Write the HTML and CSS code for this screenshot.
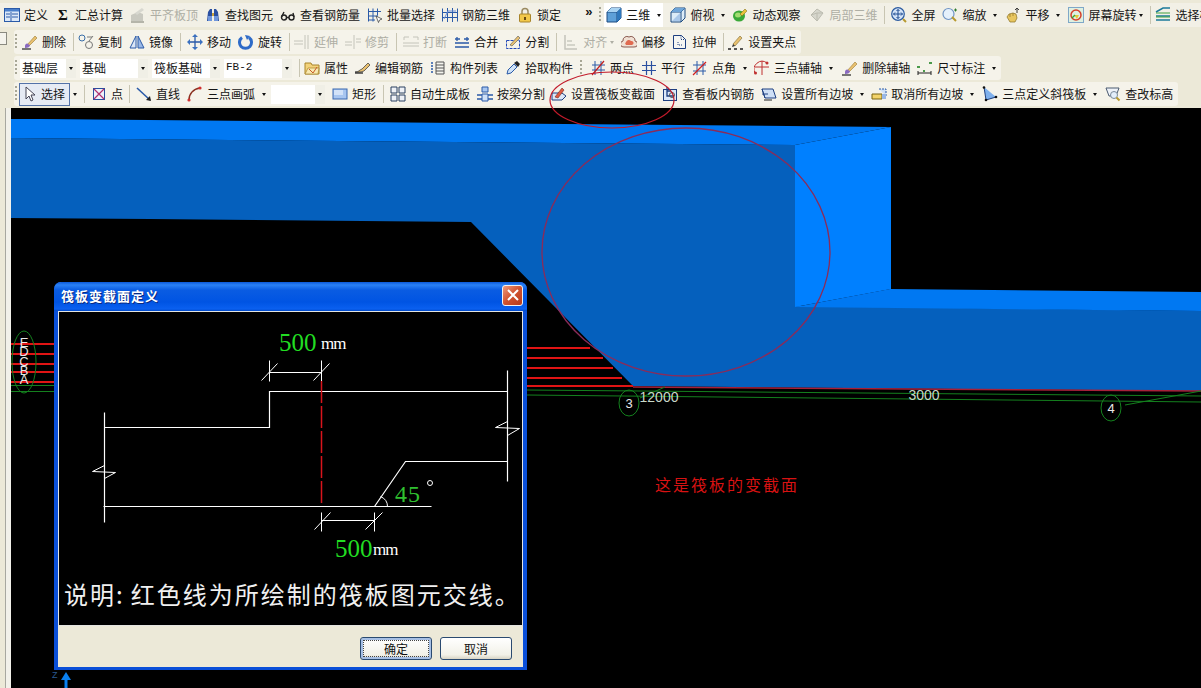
FILE: index.html
```html
<!DOCTYPE html>
<html lang="zh-CN">
<head>
<meta charset="utf-8">
<title>筏板变截面定义</title>
<link rel="stylesheet" href="styles.css">
</head>
<body>
<svg class="defs" width="0" height="0" aria-hidden="true">
  <defs>
    <symbol id="i-form" viewBox="0 0 16 16"><rect x=".5" y="1.5" width="15" height="13" fill="#dbe8f8" stroke="#2a5aa8"/><rect x="1" y="2" width="14" height="2.5" fill="#4a80cc"/><path d="M2 7h4M2 10h4M8 7h6M8 10h6M7 5v9" stroke="#2a5aa8"/></symbol>
    <symbol id="i-align" viewBox="0 0 16 16"><path d="M1 14V8l7-3v9zM8 14V5l5 2v7z" fill="#c9c9c0"/><path d="M5 6l7-5 2 2-7 5z" fill="#d8d8d0"/><path d="M1 15h13" stroke="#b5b5aa" stroke-width="2"/></symbol>
    <symbol id="i-binoc" viewBox="0 0 16 16"><path d="M2 14l1-9 2-3h2v12zM14 14l-1-9-2-3H9v12z" fill="#2a4fa0"/><path d="M3 14V9h4v5zM9 14V9h4v5z" fill="#6f96dc"/><path d="M7 6h2v3H7z" fill="#c9a13a"/></symbol>
    <symbol id="i-glass" viewBox="0 0 16 16"><g fill="none" stroke="#222" stroke-width="1.4"><circle cx="4" cy="10.5" r="2.5"/><circle cx="11.5" cy="10.5" r="2.5"/><path d="M1.5 10L4 5M14 10l-1-4M6.5 10.5h2.5"/></g></symbol>
    <symbol id="i-batch" viewBox="0 0 16 16"><g fill="none" stroke="#2a5aa8"><path d="M1.5 1.5v13M6 1.5v13M10.5 1.5v7M1 4.5h13M1 9h10M1 13h7"/></g><path d="M9 9l6 3-2.5 1-1 2.500z" fill="#fff" stroke="#333" stroke-width=".7"/></symbol>
    <symbol id="i-rebar3d" viewBox="0 0 16 16"><g fill="none" stroke="#2a5aa8"><path d="M.5 1.500v13M15.500 1.500v13M5.500 1v14M10.500 1v14M0 5.500h16M0 10.500h16"/></g><path d="M2 12l4-8h8" fill="none" stroke="#6a8fd8"/></symbol>
    <symbol id="i-lock" viewBox="0 0 16 16"><path d="M5 7V4.500a3 3 0 0 1 6 0V7" fill="none" stroke="#9a8a60" stroke-width="1.5"/><rect x="2.500" y="7" width="11" height="8" rx="1" fill="#f2c84a" stroke="#a8842a"/><path d="M7 10h2v3H7z" fill="#6a4c10"/></symbol>
    <symbol id="i-cube" viewBox="0 0 16 16"><path d="M1 5l4-4h10v10l-4 4H1z" fill="#5ea0d8" stroke="#1d4a80"/><path d="M1 5h10v10M11 5l4-4" fill="none" stroke="#1d4a80"/><path d="M1 5l4-4h10l-4 4z" fill="#a9d3f2"/><path d="M11 5l4-4v10l-4 4z" fill="#2f78bc"/></symbol>
    <symbol id="i-cube2" viewBox="0 0 16 16"><path d="M1 5l4-4h10v10l-4 4H1z" fill="#dcecf8" stroke="#1d4a80"/><path d="M1 5h10v10M11 5l4-4" fill="none" stroke="#1d4a80"/><path d="M1 5l4-4h10l-4 4z" fill="#6fa5d8"/><path d="M2 14l8-8v8z" fill="#a9c8ea"/></symbol>
    <symbol id="i-orbit" viewBox="0 0 16 16"><ellipse cx="7" cy="9" rx="6" ry="5.500" fill="#3aa838"/><ellipse cx="6" cy="8" rx="3" ry="2.500" fill="#a2dc70"/><path d="M8 7l5-5 2 2-5 5z" fill="#e6c23a" stroke="#7a6410" stroke-width=".5"/></symbol>
    <symbol id="i-local" viewBox="0 0 16 16"><path d="M8 2l6 4-6 8-6-6z" fill="#d6d6cc" stroke="#bcbcb0"/><path d="M2 8l6-2 6 0M8 6v8" stroke="#bcbcb0" fill="none"/></symbol>
    <symbol id="i-zoomfull" viewBox="0 0 16 16"><circle cx="7" cy="7" r="6.300" fill="#d3e3f7" stroke="#2c5ba0" stroke-width="1.200"/><path d="M7 2.500v9M2.500 7h9M5.500 4L7 2.500 8.500 4M5.500 10L7 11.500 8.500 10M4 5.500L2.500 7 4 8.500M10 5.500L11.500 7 10 8.500" stroke="#1d4a90" fill="none"/><path d="M12 12l3 3" stroke="#b89a30" stroke-width="2"/></symbol>
    <symbol id="i-zoom" viewBox="0 0 16 16"><circle cx="6.500" cy="7" r="5.500" fill="#e5f0fb" stroke="#6f94c4" stroke-width="1.200"/><path d="M10 10l4 4" stroke="#b89a30" stroke-width="2"/><path d="M12 3h3M13.500 1.500v3" stroke="#2c7a2c"/></symbol>
    <symbol id="i-pan" viewBox="0 0 16 16"><path d="M2 10l2-3 4-1 3 1 1 4-2 4H5z" fill="#e8c660" stroke="#8a7024" stroke-width=".7"/><path d="M12 1v5M10 3l2-2 2 2" stroke="#3d3d3d" fill="none"/><path d="M8 6v3M5 7v3" stroke="#8a7024" stroke-width=".7"/></symbol>
    <symbol id="i-screenrot" viewBox="0 0 16 16"><rect x=".5" y=".5" width="15" height="15" fill="#dff0e0" stroke="#7fa8c8"/><circle cx="8" cy="8" r="5" fill="none" stroke="#d6402a" stroke-width="1.500"/><path d="M6 8h5l-2 4z" fill="#e8c83a"/><path d="M4 11l3-3" stroke="#3aa838" stroke-width="1.500"/></symbol>
    <symbol id="i-layer" viewBox="0 0 16 16"><path d="M1 5l7-4h7M1 9h14M1 13h14" stroke="#1d7a9a" stroke-width="1.500" fill="none"/><path d="M1 6h14M1 10h14" stroke="#3ea03e"/></symbol>
    <symbol id="i-brush" viewBox="0 0 16 16"><path d="M5 11l8-9 2 2-8 8z" fill="#e8c070" stroke="#9a7a30" stroke-width=".6"/><path d="M3 12c0-2 2-3 3-2l2 1c0 2-2 3-5 3z" fill="#8a6ac0"/><path d="M0 15h9" stroke="#222" stroke-width="1.200"/></symbol>
    <symbol id="i-copy" viewBox="0 0 16 16"><g fill="none" stroke="#3a6ea8"><circle cx="4" cy="4" r="3"/></g><g fill="none" stroke="#777"><circle cx="11" cy="11" r="3.500"/><path d="M9 3l5 0M11 7l4-5"/></g></symbol>
    <symbol id="i-mirror" viewBox="0 0 16 16"><path d="M7 2v12H1z" fill="#dbe6f6" stroke="#2a5aa8"/><path d="M9 2v12h6z" fill="#9ab8e6" stroke="#2a5aa8"/></symbol>
    <symbol id="i-move" viewBox="0 0 16 16"><path d="M8 1v14M1 8h14" stroke="#2a5aa8" stroke-width="1.300"/><path d="M8 0l3 3H5zM8 16l3-3H5zM0 8l3-3v6zM16 8l-3-3v6z" fill="#3a70c0"/></symbol>
    <symbol id="i-rotate" viewBox="0 0 16 16"><path d="M4 3.500a6 6 0 1 0 7 0" fill="none" stroke="#2e6bc8" stroke-width="3"/><path d="M7 1l5 1-3 4z" fill="#2e6bc8"/></symbol>
    <symbol id="i-extend" viewBox="0 0 16 16"><path d="M0 7h9M0 10h9M11 1v14M14 1v14" stroke="#c4c4ba" fill="none"/></symbol>
    <symbol id="i-trim" viewBox="0 0 16 16"><path d="M0 8h7M0 11h7M9 1v14M11 5h5M11 8h5" stroke="#c4c4ba" fill="none"/></symbol>
    <symbol id="i-break" viewBox="0 0 16 16"><path d="M1 6V3h5M10 3h5v3M0 9h16M0 12h16" stroke="#c4c4ba" fill="none"/></symbol>
    <symbol id="i-merge" viewBox="0 0 16 16"><path d="M1 9h14M1 13h14M3 3v4M13 3v4M1 5h5M10 5h5" stroke="#2a5aa8" stroke-width="1.300" fill="none"/></symbol>
    <symbol id="i-split" viewBox="0 0 16 16"><rect x="1.500" y="6.500" width="13" height="8" fill="none" stroke="#2348b8" stroke-dasharray="3 1"/><path d="M5 11l8-9 2 2-8 8z" fill="#e8c070" stroke="#555" stroke-width=".6"/></symbol>
    <symbol id="i-alignL" viewBox="0 0 16 16"><path d="M2 1v14h12" stroke="#c4c4ba" fill="none" stroke-width="1.500"/><path d="M4 6h5v2H4zM4 10h8v2H4z" fill="#d4d4ca"/></symbol>
    <symbol id="i-offset" viewBox="0 0 16 16"><path d="M3 13a3 3 0 0 1-1-6 4 4 0 0 1 6-4 4 4 0 0 1 6 4 3 3 0 0 1-1 6z" fill="#f0e0d4" stroke="#8a5a50"/><path d="M5 11a2 2 0 0 1 0-3 3 3 0 0 1 5-1 2 2 0 0 1 1 4z" fill="#e06a50"/></symbol>
    <symbol id="i-stretch" viewBox="0 0 16 16"><path d="M1.500 1.500h8l4 4v9h-12z" fill="#f6f6f2" stroke="#1d3f80"/><path d="M9 1.500v4h4.500M6 8v3h4" fill="none" stroke="#1d3f80" stroke-dasharray="1 1"/></symbol>
    <symbol id="i-grip" viewBox="0 0 16 16"><path d="M5 10l7-8 2 2-7 8z" fill="#e8c070" stroke="#7a6a30" stroke-width=".6"/><path d="M0 15h3M6 15h3M12 15h3" stroke="#222" stroke-width="1.400"/><path d="M5 10l-1 3 3-1z" fill="#333"/></symbol>
    <symbol id="i-attr" viewBox="0 0 16 16"><path d="M1 3h6l1 2h7v9H1z" fill="#f3d27a" stroke="#a8842a"/><path d="M1 14l3-6h11l-1 6z" fill="#f8e8b0" stroke="#a8842a" stroke-width=".7"/><path d="M5 9l4 4 4-6" stroke="#c85a2a" fill="none"/></symbol>
    <symbol id="i-pen" viewBox="0 0 16 16"><path d="M0 12c4 0 4-2 7-3l6-6 2 2-6 6c-3 1-4 1-9 1z" fill="#e8c070" stroke="#333" stroke-width=".7"/><path d="M0 13h8" stroke="#111" stroke-width="1.200"/></symbol>
    <symbol id="i-list" viewBox="0 0 16 16"><path d="M6 2h8v12H6z" fill="#f4f4ee" stroke="#555"/><path d="M6 5h8M6 8h8M6 11h8" stroke="#555"/><path d="M1 3h2M1 6h2M1 9h2M1 12h2" stroke="#2a5aa8" stroke-width="1.500"/></symbol>
    <symbol id="i-drop" viewBox="0 0 16 16"><path d="M2 14l1-4 6-6 3 3-6 6z" fill="#cfe2f7" stroke="#2a5aa8"/><path d="M9 3l3-2 3 3-2 3z" fill="#222"/></symbol>
    <symbol id="i-twopt" viewBox="0 0 16 16"><path d="M2 5h13M2 10h13M5 1v14M11 1v14" stroke="#2a5aa8" fill="none"/><path d="M2 15L14 1" stroke="#c02020" stroke-width="1.200"/></symbol>
    <symbol id="i-par" viewBox="0 0 16 16"><path d="M1 5.500h14M1 10.500h14M5.500 1v14M10.500 1v14" stroke="#2a4fa0" stroke-width="1.200"/></symbol>
    <symbol id="i-angle" viewBox="0 0 16 16"><path d="M1 5h13M1 11h13M5 1v14M11 1v14" stroke="#2a5aa8" fill="none"/><path d="M1 15L14 2" stroke="#d02020" stroke-width="1.300"/></symbol>
    <symbol id="i-threeax" viewBox="0 0 16 16"><path d="M1 7h14M8 1v14" stroke="#c03030" fill="none"/><path d="M1 13a8 8 0 0 1 12-10" stroke="#c03030" fill="none"/><circle cx="1.500" cy="13" r="1.500" fill="#c03030"/><circle cx="13" cy="3" r="1.500" fill="#c03030"/></symbol>
    <symbol id="i-dim" viewBox="0 0 16 16"><path d="M1 11v4M14 11v4M1 13h13" stroke="#222" fill="none"/><path d="M0 6h3v2H0zM6 10h2v2H6zM12 2h3v2h-3z" fill="#4a9a4a"/></symbol>
    <symbol id="i-cursor" viewBox="0 0 16 16"><path d="M5 1v12l3-3 2 5 2-1-2-5h4z" fill="#fff" stroke="#445"/></symbol>
    <symbol id="i-point" viewBox="0 0 16 16"><rect x="2.500" y="2.500" width="11" height="11" fill="#eef2fa" stroke="#2a4fa0"/><path d="M3 3l10 10M13 3L3 13" stroke="#b03070" stroke-width="1.200"/></symbol>
    <symbol id="i-line" viewBox="0 0 16 16"><path d="M1 2l13 12" stroke="#2a5aa8" stroke-width="1.600"/><path d="M15 15l-5-1 4-4z" fill="#222"/></symbol>
    <symbol id="i-arc" viewBox="0 0 16 16"><path d="M2 14C2 8 6 3 13 2" fill="none" stroke="#8a3020" stroke-width="1.500"/><circle cx="2" cy="14" r="1.600" fill="#d03030"/><circle cx="13" cy="2" r="1.600" fill="#d03030"/></symbol>
    <symbol id="i-rect" viewBox="0 0 16 16"><rect x="1" y="3" width="14" height="10" fill="#a8c6f0" stroke="#3a68b0"/><rect x="2" y="4" width="9" height="5" fill="#d2e2f8"/></symbol>
    <symbol id="i-auto" viewBox="0 0 16 16"><path d="M1 1h6v6H1zM9 1h6v6H9zM1 9h6v6H1zM9 9h6v6H9z" fill="#eef1f6" stroke="#2a4060"/></symbol>
    <symbol id="i-beam" viewBox="0 0 16 16"><path d="M5 1h6v5H5z" fill="#a8c6f0" stroke="#2a5aa8"/><path d="M0 9h16M0 13h16" stroke="#2a5aa8" stroke-width="1.300"/><path d="M5 8h6v7H5z" fill="#cfe0f6" stroke="#2a5aa8"/></symbol>
    <symbol id="i-setvar" viewBox="0 0 16 16"><path d="M1 7h10l4 3-4 4H1z" fill="#dce8f8" stroke="#1d3f80"/><path d="M4 11l7-9 2 2-6 8z" fill="#e05a40" stroke="#7a2a20" stroke-width=".6"/></symbol>
    <symbol id="i-viewin" viewBox="0 0 16 16"><rect x="1.500" y="3.500" width="13" height="11" fill="#dce8f8" stroke="#1d3f80"/><path d="M5 1v9h7M5 5h4" fill="none" stroke="#1d3f80" stroke-width="1.300"/><circle cx="10" cy="9" r="2.500" fill="none" stroke="#555"/></symbol>
    <symbol id="i-slope" viewBox="0 0 16 16"><path d="M1 3h11l3 9H4z" fill="#cfe0f6" stroke="#1d3f80"/><path d="M1 3l3 9M1 8h6" stroke="#1d3f80" fill="none"/><path d="M3 14h8" stroke="#222"/></symbol>
    <symbol id="i-noslope" viewBox="0 0 16 16"><path d="M1 8h10v5H1z" fill="#f2d36a" stroke="#7a6410"/><path d="M8 3l7 0v7" fill="#cfe0f6" stroke="#2a5aa8" stroke-dasharray="2 1"/><path d="M11 8h4v5h-4z" fill="#9ab8e6"/></symbol>
    <symbol id="i-tri" viewBox="0 0 16 16"><path d="M2 1l2 13 10-3z" fill="#7fb0ec"/><path d="M2 1l2 13 10-3" fill="none" stroke="#1d3f80"/><circle cx="2" cy="1.500" r="1.300" fill="#111"/><circle cx="4" cy="14" r="1.300" fill="#111"/><circle cx="14" cy="11" r="1.300" fill="#111"/></symbol>
    <symbol id="i-check" viewBox="0 0 16 16"><path d="M1 2h13l-3 8H4z" fill="#eef2f8" stroke="#4a5a70"/><circle cx="9" cy="9" r="3.500" fill="#e3eefa" stroke="#7a8a9a"/><path d="M11.500 11.500l3 3" stroke="#b89a30" stroke-width="2"/></symbol>
  </defs>
</svg>

<div class="app">
  <header class="tools">
    <div class="row r1">
      <div class="it"><svg class="ic"><use href="#i-form"/></svg><span>定义</span></div>
      <div class="it"><span class="ic sigma">Σ</span><span>汇总计算</span></div>
      <div class="it off"><svg class="ic"><use href="#i-align"/></svg><span>平齐板顶</span></div>
      <div class="it"><svg class="ic"><use href="#i-binoc"/></svg><span>查找图元</span></div>
      <div class="it"><svg class="ic"><use href="#i-glass"/></svg><span>查看钢筋量</span></div>
      <div class="it"><svg class="ic"><use href="#i-batch"/></svg><span>批量选择</span></div>
      <div class="it"><svg class="ic"><use href="#i-rebar3d"/></svg><span>钢筋三维</span></div>
      <div class="it"><svg class="ic"><use href="#i-lock"/></svg><span>锁定</span></div>
      <span class="more">»</span>
      <i class="grip g-hl"></i>
      <div class="hl">
        <div class="it"><svg class="ic"><use href="#i-cube"/></svg><span>三维</span></div>
        <i class="arr"></i>
      </div>
      <div class="it"><svg class="ic"><use href="#i-cube2"/></svg><span>俯视</span></div>
      <i class="arr"></i>
      <div class="it"><svg class="ic"><use href="#i-orbit"/></svg><span>动态观察</span></div>
      <div class="it off plus2"><svg class="ic"><use href="#i-local"/></svg><span>局部三维</span></div>
      <i class="sep wide"></i>
      <div class="it"><svg class="ic"><use href="#i-zoomfull"/></svg><span>全屏</span></div>
      <div class="it"><svg class="ic"><use href="#i-zoom"/></svg><span>缩放</span></div>
      <i class="arr"></i>
      <div class="it plus1"><svg class="ic"><use href="#i-pan"/></svg><span>平移</span></div>
      <i class="arr"></i>
      <div class="it plus1"><svg class="ic"><use href="#i-screenrot"/></svg><span>屏幕旋转</span></div>
      <i class="arr tight"></i>
      <i class="sep"></i>
      <div class="it"><svg class="ic"><use href="#i-layer"/></svg><span>选择构件</span></div>
    </div>

    <div class="row bar">
      <i class="grip"></i>
      <div class="it"><svg class="ic"><use href="#i-brush"/></svg><span>删除</span></div>
      <i class="sep"></i>
      <div class="it"><svg class="ic"><use href="#i-copy"/></svg><span>复制</span></div>
      <div class="it"><svg class="ic"><use href="#i-mirror"/></svg><span>镜像</span></div>
      <i class="sep wide"></i>
      <div class="it"><svg class="ic"><use href="#i-move"/></svg><span>移动</span></div>
      <div class="it"><svg class="ic"><use href="#i-rotate"/></svg><span>旋转</span></div>
      <i class="sep"></i>
      <div class="it off"><svg class="ic"><use href="#i-extend"/></svg><span>延伸</span></div>
      <div class="it off"><svg class="ic"><use href="#i-trim"/></svg><span>修剪</span></div>
      <i class="sep wide"></i>
      <div class="it off"><svg class="ic"><use href="#i-break"/></svg><span>打断</span></div>
      <div class="it"><svg class="ic"><use href="#i-merge"/></svg><span>合并</span></div>
      <div class="it"><svg class="ic"><use href="#i-split"/></svg><span>分割</span></div>
      <i class="sep wide"></i>
      <div class="it off"><svg class="ic"><use href="#i-alignL"/></svg><span>对齐</span></div>
      <i class="arr tight dim"></i>
      <div class="it"><svg class="ic"><use href="#i-offset"/></svg><span>偏移</span></div>
      <div class="it"><svg class="ic"><use href="#i-stretch"/></svg><span>拉伸</span></div>
      <i class="sep"></i>
      <div class="it"><svg class="ic"><use href="#i-grip"/></svg><span>设置夹点</span></div>
    </div>

    <div class="row bar">
      <i class="grip g-combo"></i>
      <div class="combos">
        <div class="combo c-s"><span class="val">基础层</span><span class="drop"><i class="arr"></i></span></div>
        <div class="combo"><span class="val">基础</span><span class="drop"><i class="arr"></i></span></div>
        <div class="combo"><span class="val">筏板基础</span><span class="drop"><i class="arr"></i></span></div>
        <div class="combo"><span class="val mono">FB-2</span><span class="drop"><i class="arr"></i></span></div>
      </div>
      <i class="sep"></i>
      <div class="it"><svg class="ic"><use href="#i-attr"/></svg><span>属性</span></div>
      <div class="it"><svg class="ic"><use href="#i-pen"/></svg><span>编辑钢筋</span></div>
      <div class="it"><svg class="ic"><use href="#i-list"/></svg><span>构件列表</span></div>
      <div class="it"><svg class="ic"><use href="#i-drop"/></svg><span>拾取构件</span></div>
      <i class="grip g-mid"></i>
      <div class="it"><svg class="ic"><use href="#i-twopt"/></svg><span>两点</span></div>
      <div class="it"><svg class="ic"><use href="#i-par"/></svg><span>平行</span></div>
      <div class="it"><svg class="ic"><use href="#i-angle"/></svg><span>点角</span></div>
      <i class="arr"></i>
      <div class="it"><svg class="ic"><use href="#i-threeax"/></svg><span>三点辅轴</span></div>
      <i class="arr"></i>
      <div class="it plus2"><svg class="ic"><use href="#i-brush"/></svg><span>删除辅轴</span></div>
      <div class="it"><svg class="ic"><use href="#i-dim"/></svg><span>尺寸标注</span></div>
      <i class="arr"></i>
    </div>

    <div class="row bar">
      <i class="grip g-sel"></i>
      <div class="it selected"><svg class="ic"><use href="#i-cursor"/></svg><span>选择</span></div>
      <i class="arr tight"></i>
      <i class="sep"></i>
      <div class="it pt"><svg class="ic"><use href="#i-point"/></svg><span>点</span></div>
      <i class="sep"></i>
      <div class="it plus2"><svg class="ic"><use href="#i-line"/></svg><span>直线</span></div>
      <div class="it"><svg class="ic"><use href="#i-arc"/></svg><span>三点画弧</span></div>
      <i class="arr"></i>
      <div class="combo c-blank"><span class="val"></span><span class="drop"><i class="arr"></i></span></div>
      <div class="it"><svg class="ic"><use href="#i-rect"/></svg><span>矩形</span></div>
      <i class="sep wide"></i>
      <div class="it"><svg class="ic"><use href="#i-auto"/></svg><span>自动生成板</span></div>
      <div class="it"><svg class="ic"><use href="#i-beam"/></svg><span>按梁分割</span></div>
      <div class="it nudge"><svg class="ic"><use href="#i-setvar"/></svg><span>设置筏板变截面</span></div>
      <div class="it"><svg class="ic"><use href="#i-viewin"/></svg><span>查看板内钢筋</span></div>
      <div class="it"><svg class="ic"><use href="#i-slope"/></svg><span>设置所有边坡</span></div>
      <i class="arr"></i>
      <div class="it"><svg class="ic"><use href="#i-noslope"/></svg><span>取消所有边坡</span></div>
      <i class="arr"></i>
      <div class="it plus1"><svg class="ic"><use href="#i-tri"/></svg><span>三点定义斜筏板</span></div>
      <i class="arr"></i>
      <div class="it plus1"><svg class="ic"><use href="#i-check"/></svg><span>查改标高</span></div>
    </div>
  </header>

  <aside class="side-tab"></aside>

  <main class="work">
    <div class="side"></div>
    <section class="canvas">
      <svg class="cad" viewBox="11 108 1190 580">
        <path class="blue-d" d="M11 138L795 145V306L1201 311V391L633 386 471 222 150 219 11 218z"/>
        <path class="blue-l" d="M11 119L40 119 891 127 795 145 11 138z"/>
        <path class="blue-c" d="M891 127V289L795 307V145z"/>
        <path class="blue-l" d="M890 289L1201 292V311L795 307z"/>
        <g class="red">
          <path d="M11 344H54M11 354H54M11 364H54M11 372H54M11 382H54"/>
          <path d="M527 348H590M527 358H603M527 368H613M527 378H622M527 386H633"/>
          <path class="edge" d="M633 387L1201 391"/>
        </g>
        <ellipse class="mark" cx="686" cy="252" rx="144" ry="124"/>
        <g class="green">
          <path d="M11 385.500H54M11 391.500H54"/>
          <path d="M527 390L1201 396M527 395L1201 402M640 398L665 387M1125 405L1201 391"/>
          <ellipse cx="24" cy="362" rx="12" ry="31"/>
          <ellipse cx="629" cy="403" rx="10" ry="13"/>
          <ellipse cx="1111" cy="408" rx="10" ry="13"/>
        </g>
        <g class="labels">
          <text x="24" y="347">E</text>
          <text x="24" y="356">D</text>
          <text x="24" y="366">C</text>
          <text x="24" y="375">B</text>
          <text x="24" y="384">A</text>
          <text x="629" y="408">3</text>
          <text x="1111" y="413">4</text>
          <text class="dimtxt" x="659" y="402">12000</text>
          <text class="dimtxt" x="924" y="400">3000</text>
        </g>
        <text class="note" x="655" y="491">这是筏板的变截面</text>
        <path class="zaxis" d="M66 672l-5 8h3.500v8h3v-8h3.500z"/>
        <text class="ztxt" x="52" y="678">Z</text>
      </svg>

      <div class="dialog">
        <div class="title">
          <span class="title-txt">筏板变截面定义</span>
          <button class="close" type="button" aria-label="关闭">
            <svg viewBox="0 0 12 12" width="12" height="12"><path d="M1 1l10 10M11 1L1 11" stroke="#fff" stroke-width="2"/></svg>
          </button>
        </div>
        <div class="panel">
          <svg class="sketch" viewBox="59 312 463 313">
            <g class="w">
              <path d="M104 427H269V391H507"/>
              <path d="M104 412V522"/>
              <path d="M507 370V481"/>
              <path d="M103 506H431"/>
              <path d="M374 506L405 461H507"/>
              <path class="thin" d="M507 421L495 427 519 428 507 435"/>
              <path class="thin" d="M104 465L92 471 115 472 104 478"/>
              <path class="thin" d="M269 372H321M269 360V381M321 360V381M261 380L277 363M313 380L329 363"/>
              <path class="thin" d="M321 520H374M321 512V531M374 512V531M314 529L330 512M365 529L382 512"/>
              <path class="thin" d="M380 496Q387 499 387 506"/>
            </g>
            <path class="dash" d="M321.500 381V506"/>
            <text class="num" x="279" y="351">500</text>
            <text class="unit" x="321" y="349">mm</text>
            <text class="num" x="335" y="557">500</text>
            <text class="unit" x="373" y="555">mm</text>
            <text class="ang" x="395" y="502">45</text>
            <circle class="deg" cx="430" cy="483" r="2.500"/>
            <text class="desc" x="64" y="604">说明:<tspan dx="6">红色线为所绘制的筏板图元交线。</tspan></text>
          </svg>
        </div>
        <div class="foot">
          <button class="btn primary" type="button">确定</button>
          <button class="btn" type="button">取消</button>
        </div>
      </div>
    </section>
  </main>

  <svg class="annot" viewBox="0 0 1201 688"><ellipse cx="612" cy="100" rx="62" ry="28"/></svg>
</div>
</body>
</html>
```
FILE: styles.css
```css
* { box-sizing: border-box; }
html, body { margin: 0; padding: 0; height: 100%; overflow: hidden; }
body { background: #ece9d8; font: 12px/1 "Noto Sans CJK SC", "Liberation Sans", sans-serif; color: #151515; }
.defs { position: absolute; }

.app { position: relative; width: 1201px; height: 688px; display: flex; flex-direction: column; overflow: hidden; }

.tools { flex: none; padding: 3px 0 2px; display: flex; flex-direction: column; gap: 2px; }
.row { display: flex; align-items: center; gap: 7px; height: 24px; white-space: nowrap; }
.r1 { background: #f2f0e6; padding-left: 4px; margin-bottom: 1px; width: 1201px; }
.bar { background: #f5f3ea; width: fit-content; margin-left: 14px; padding: 0 5px 0 1px; border-radius: 3px; }

.it { display: flex; align-items: center; gap: 4px; flex: none; }
.it span { line-height: 16px; }
.ic { width: 16px; height: 16px; flex: none; display: block; }
.off { color: #aeaea4; }
.sigma { font: bold 15px/16px "Liberation Serif", serif; color: #111; text-align: center; }
.nudge { margin-left: -1px; }
.plus1 { margin-left: 1px; }
.plus2 { margin-left: 2px; }
.pt { margin-left: 2px; margin-right: -1px; }

.sep { width: 1px; height: 18px; background: #c8c5b2; flex: none; margin-right: -3px; }
.sep.wide { margin-right: -1px; }

.grip { width: 2px; height: 16px; flex: none; margin-right: -2px;
  background: repeating-linear-gradient(to bottom, #a8a796 0 2px, transparent 2px 4px); }
.g-combo { margin-right: -4px; }
.g-sel { margin-right: -5px; }
.g-mid { margin-right: 1px; }
.g-hl { margin-right: -4px; }

.arr { flex: none; width: 0; height: 0; border-style: solid; border-width: 3px 2.5px 0; border-color: #111 transparent transparent; }
.arr.tight { margin-left: -4px; }
.arr.dim { border-top-color: #aeaea4; }

.more { font: bold 13px/16px "Liberation Sans", sans-serif; margin-left: 17px; width: 8px; margin-top: -6px; }
.hl { display: flex; align-items: center; gap: 7px; background: #fff; padding: 0 2px; height: 24px; width: 60px; }

.combos { display: flex; gap: 4px; }
.combo { display: flex; height: 19px; width: 68px; flex: none; }
.combo .val { flex: 1; background: #fff; padding: 1px 0 0 2px; line-height: 15px; }
.combo .drop { width: 10px; flex: none; display: flex; align-items: center; justify-content: center; background: #f0efe6; }
.c-s { width: 56px; }
.c-blank { width: 54px; margin-left: -2px; }
.mono { font-family: "Liberation Mono", monospace; font-size: 11px; }

.selected { height: 23px; padding: 0 4px 0 1px; border: 1px solid #5372a8; background: #e6ebf4; }

.side-tab { position: absolute; left: 0; top: 32px; width: 7px; height: 13px; border: 1px solid #8a8a80; border-left: 0; background: #f4f3ec; }

.work { flex: 1; display: flex; min-height: 0; }
.side { width: 11px; flex: none; background: #ece9d8; box-shadow: inset 5px 0 0 #ece9d8, inset 6px 0 0 #a8a8a0, inset 11px 0 0 #f2f1ea; }

.canvas { flex: 1; position: relative; background: #000; min-width: 0; }
.cad { position: absolute; inset: 0; width: 100%; height: 100%; display: block; }
.blue-d { fill: #0560bd; }
.blue-l { fill: #0078f2; }
.blue-c { fill: #0080ff; }
.red path { fill: none; stroke: #e01414; stroke-width: 2; }
.red path.edge { stroke: #a82038; stroke-width: 1.500; }
.mark { fill: none; stroke: #8a2c5a; stroke-width: 1.300; }
.green path, .green ellipse { fill: none; stroke: #14801e; stroke-width: 1; }
.labels text { fill: #e8e8e8; font: 13px "Liberation Sans", sans-serif; text-anchor: middle; }
.labels .dimtxt { fill: #c8d8c8; font-size: 14px; }
.note { fill: #d81212; font: 16px "Noto Sans CJK SC", sans-serif; letter-spacing: 2px; }
.zaxis { fill: #0a80f0; }
.ztxt { fill: #2a5a90; font: 9px "Liberation Sans", sans-serif; }

.dialog { position: absolute; left: 43px; top: 174px; width: 473px; height: 388px; display: flex; flex-direction: column;
  background: #ece9d8; border: solid #0a4fd8; border-width: 0 4px 3px; border-radius: 7px 7px 0 0; }
.title { height: 29px; flex: none; margin: 0 -4px; padding: 0 4px 3px 7px; display: flex; align-items: center; justify-content: space-between;
  border-radius: 7px 7px 0 0;
  background: linear-gradient(to bottom, #0a58d8 0, #2a80f4 3px, #0a5ce2 8px, #0054e3 20px, #0a60f0 27px, #0048c8 29px); }
.title-txt { color: #fff; font-size: 13px; font-weight: 700; letter-spacing: 1px; text-shadow: 1px 1px 0 #0a2a80; }
.close { width: 21px; height: 21px; padding: 0; display: flex; align-items: center; justify-content: center;
  border: 1px solid #f2f2f2; border-radius: 3px; background: linear-gradient(135deg, #ee9a7c, #d0512e 50%, #b83a1a); }
.panel { height: 315px; flex: none; background: #000; border: 1px solid #e4e4e0; }
.sketch { width: 100%; height: 100%; display: block; }
.w { transform: translate(.5px, .5px); }
.w path { fill: none; stroke: #fff; stroke-width: 1.200; }
.w path.thin { stroke-width: 1; }
.dash { fill: none; stroke: #d8141c; stroke-width: 1.500; stroke-dasharray: 22 3; }
.num { fill: #22dd22; font: 25px "Liberation Serif", serif; }
.unit { fill: #fff; font: 17px "Liberation Serif", serif; letter-spacing: -1px; }
.ang { fill: #30c030; font: 24px "Liberation Serif", serif; letter-spacing: 1px; }
.deg { fill: none; stroke: #fff; stroke-width: 1; }
.desc { fill: #f0f0f0; font: 24px "Noto Sans CJK SC", sans-serif; letter-spacing: 2px; }

.foot { flex: 1; display: flex; justify-content: flex-end; gap: 8px; padding: 11px 11px 0 0; }
.btn { width: 72px; height: 23px; padding: 0; font: 12px "Noto Sans CJK SC", sans-serif; color: #111;
  border: 1px solid #2a4a70; border-radius: 3px; background: linear-gradient(to bottom, #fff, #f2f1e8 80%, #d8d4c4); }
.btn.primary { box-shadow: inset 0 0 0 2px #a6bfe4; outline: 1px dotted #444; outline-offset: -4px; }

.annot { position: absolute; inset: 0; width: 1201px; height: 688px; pointer-events: none; }
.annot ellipse { fill: none; stroke: #c21a2a; stroke-width: 1.200; }
```
